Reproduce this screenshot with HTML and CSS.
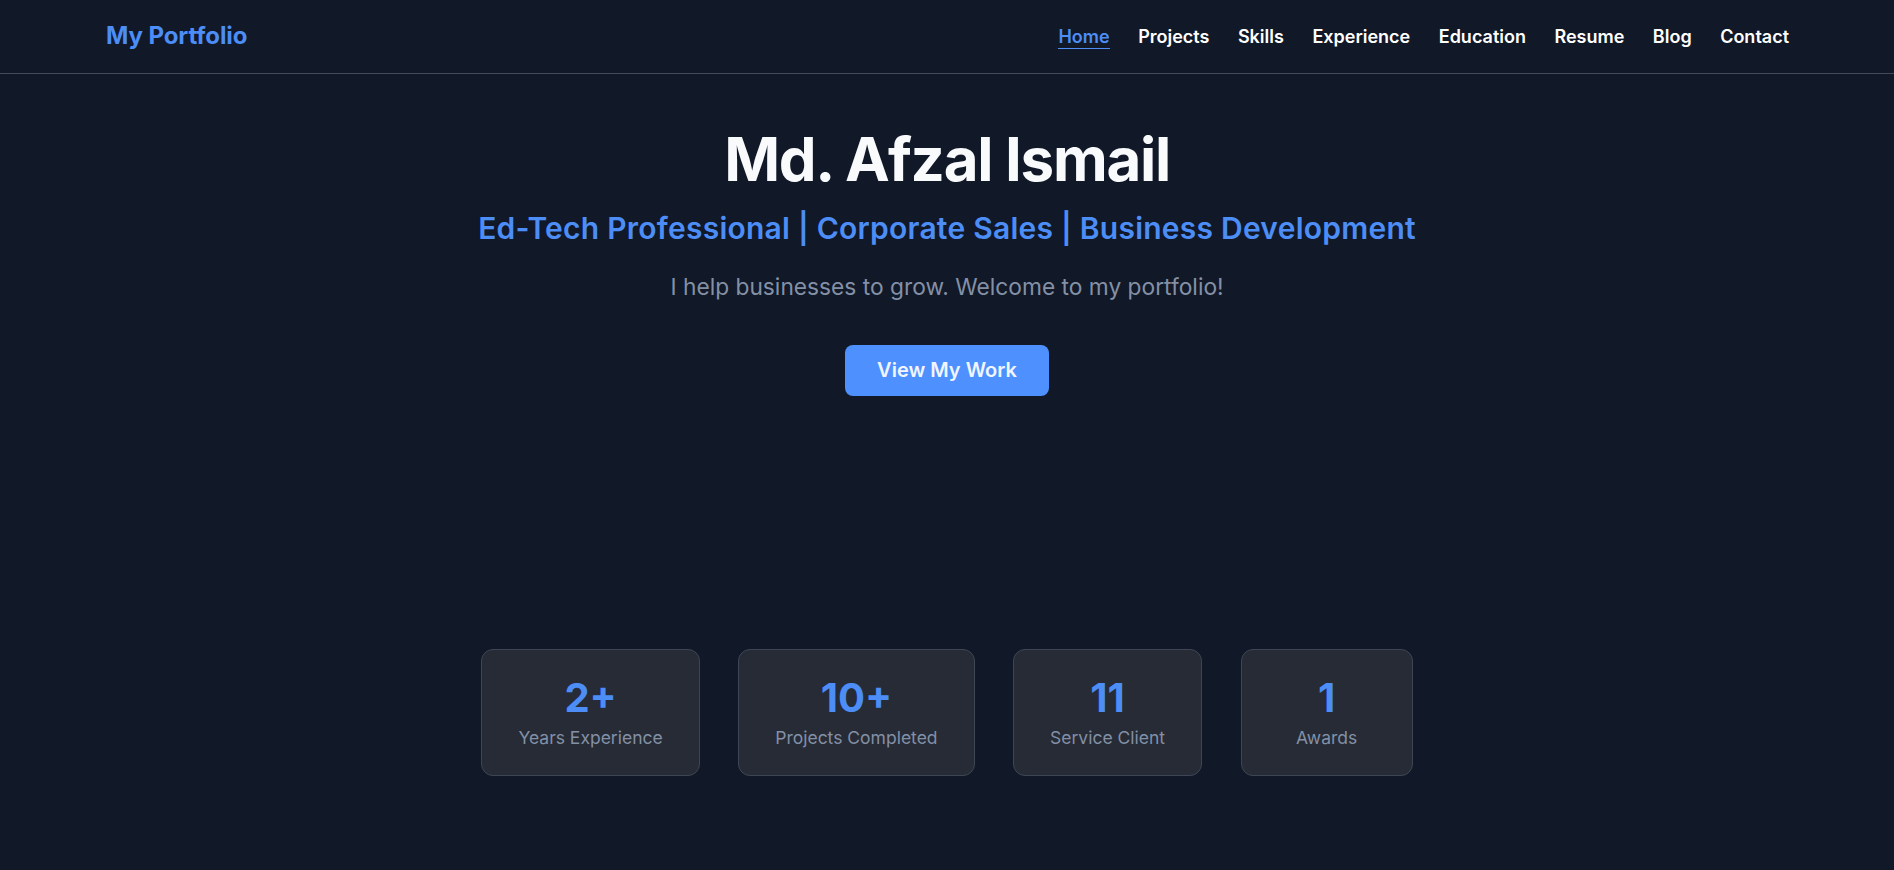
FILE: index.html
```html
<!DOCTYPE html>
<html lang="en">
<head>
<meta charset="utf-8">
<title>My Portfolio</title>
<link rel="stylesheet" href="styles.css">
</head>
<body>
<header class="site-header">
  <a class="logo" href="#">My Portfolio</a>
  <nav class="nav">
    <a class="nav-link active" href="#">Home</a>
    <a class="nav-link" href="#">Projects</a>
    <a class="nav-link" href="#">Skills</a>
    <a class="nav-link" href="#">Experience</a>
    <a class="nav-link" href="#">Education</a>
    <a class="nav-link" href="#">Resume</a>
    <a class="nav-link" href="#">Blog</a>
    <a class="nav-link" href="#">Contact</a>
  </nav>
</header>
<main class="hero">
  <h1 class="hero-title">Md. Afzal Ismail</h1>
  <h2 class="hero-subtitle">Ed-Tech Professional | Corporate Sales | Business Development</h2>
  <p class="hero-text">I help businesses to grow. Welcome to my portfolio!</p>
  <a class="btn" href="#">View My Work</a>
  <section class="stats">
    <div class="stat"><div class="stat-num">2+</div><div class="stat-label">Years Experience</div></div>
    <div class="stat"><div class="stat-num">10+</div><div class="stat-label">Projects Completed</div></div>
    <div class="stat"><div class="stat-num">11</div><div class="stat-label">Service Client</div></div>
    <div class="stat"><div class="stat-num">1</div><div class="stat-label">Awards</div></div>
  </section>
</main>
</body>
</html>
```

FILE: styles.css
```css
* { box-sizing: border-box; }
html, body { margin: 0; padding: 0; }
body {
  background: #111827;
  color: #f9fafb;
  font-family: Inter, "Noto Sans", sans-serif;
  min-height: 870px;
}
a { text-decoration: none; }

.site-header {
  height: 74px;
  border-bottom: 1px solid #434b59;
  display: flex;
  align-items: center;
  justify-content: space-between;
  padding: 0 105px 2px 106px;
}
.logo {
  color: #4c8df6;
  font-size: 24px;
  font-weight: 700;
  letter-spacing: -0.1px;
}
.nav {
  display: flex;
  gap: 28.5px;
  padding-top: 3px;
}
.nav-link {
  color: #ffffff;
  font-size: 18px;
  font-weight: 600;
  line-height: 22px;
  border-bottom: 1.5px solid transparent;
}
.nav-link.active {
  color: #4c8df6;
  border-bottom-color: #4c8df6;
}

.hero {
  display: flex;
  flex-direction: column;
  align-items: center;
  text-align: center;
  padding-top: 55px;
}
.hero-title {
  margin: 0;
  font-size: 60px;
  line-height: 60px;
  font-weight: 700;
  color: #f8fafc;
  letter-spacing: -1.3px;
}
.hero-subtitle {
  margin: 21px 0 0;
  font-size: 30px;
  line-height: 36px;
  font-weight: 600;
  color: #4c8df6;
  letter-spacing: 0.24px;
}
.hero-text {
  margin: 24px 0 0;
  font-size: 22.75px;
  line-height: 33px;
  color: #8390a6;
}
.btn {
  margin-top: 42px;
  background: #4d90fe;
  color: #f1f5ff;
  font-size: 20px;
  font-weight: 600;
  line-height: 27px;
  padding: 12px 32px;
  border-radius: 8px;
}

.stats {
  margin-top: 253px;
  display: flex;
  gap: 38.5px;
}
.stat {
  background: #262b35;
  border: 1px solid #3e4656;
  border-radius: 12px;
  padding: 24px 36px;
  display: flex;
  flex-direction: column;
  align-items: center;
  min-width: 172px;
}
.stat-num {
  font-size: 40px;
  line-height: 48px;
  font-weight: 700;
  color: #4c8df6;
}
.stat-label {
  margin-top: 3px;
  font-size: 17.5px;
  line-height: 26px;
  color: #8390a6;
}
```
